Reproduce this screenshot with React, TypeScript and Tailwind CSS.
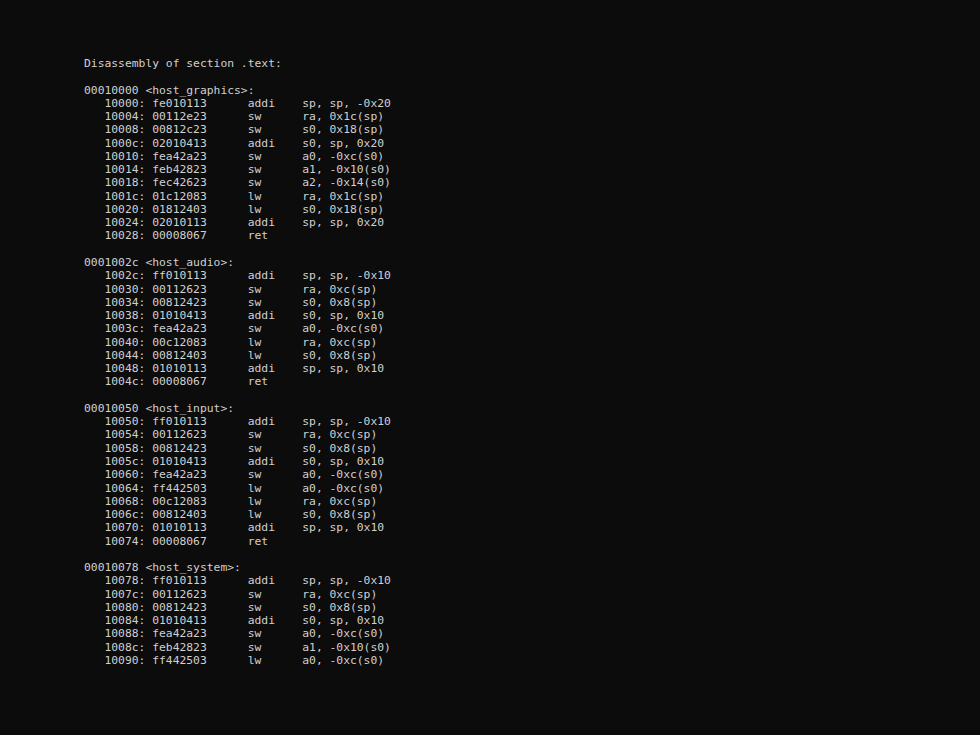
import React from 'react';

type Row = [string, string, string, string];

interface Section {
  addr: string;
  name: string;
  rows: Row[];
}

const sections: Section[] = [
  {
    addr: '00010000',
    name: 'host_graphics',
    rows: [
      ['10000', 'fe010113', 'addi', 'sp, sp, -0x20'],
      ['10004', '00112e23', 'sw', 'ra, 0x1c(sp)'],
      ['10008', '00812c23', 'sw', 's0, 0x18(sp)'],
      ['1000c', '02010413', 'addi', 's0, sp, 0x20'],
      ['10010', 'fea42a23', 'sw', 'a0, -0xc(s0)'],
      ['10014', 'feb42823', 'sw', 'a1, -0x10(s0)'],
      ['10018', 'fec42623', 'sw', 'a2, -0x14(s0)'],
      ['1001c', '01c12083', 'lw', 'ra, 0x1c(sp)'],
      ['10020', '01812403', 'lw', 's0, 0x18(sp)'],
      ['10024', '02010113', 'addi', 'sp, sp, 0x20'],
      ['10028', '00008067', 'ret', ''],
    ],
  },
  {
    addr: '0001002c',
    name: 'host_audio',
    rows: [
      ['1002c', 'ff010113', 'addi', 'sp, sp, -0x10'],
      ['10030', '00112623', 'sw', 'ra, 0xc(sp)'],
      ['10034', '00812423', 'sw', 's0, 0x8(sp)'],
      ['10038', '01010413', 'addi', 's0, sp, 0x10'],
      ['1003c', 'fea42a23', 'sw', 'a0, -0xc(s0)'],
      ['10040', '00c12083', 'lw', 'ra, 0xc(sp)'],
      ['10044', '00812403', 'lw', 's0, 0x8(sp)'],
      ['10048', '01010113', 'addi', 'sp, sp, 0x10'],
      ['1004c', '00008067', 'ret', ''],
    ],
  },
  {
    addr: '00010050',
    name: 'host_input',
    rows: [
      ['10050', 'ff010113', 'addi', 'sp, sp, -0x10'],
      ['10054', '00112623', 'sw', 'ra, 0xc(sp)'],
      ['10058', '00812423', 'sw', 's0, 0x8(sp)'],
      ['1005c', '01010413', 'addi', 's0, sp, 0x10'],
      ['10060', 'fea42a23', 'sw', 'a0, -0xc(s0)'],
      ['10064', 'ff442503', 'lw', 'a0, -0xc(s0)'],
      ['10068', '00c12083', 'lw', 'ra, 0xc(sp)'],
      ['1006c', '00812403', 'lw', 's0, 0x8(sp)'],
      ['10070', '01010113', 'addi', 'sp, sp, 0x10'],
      ['10074', '00008067', 'ret', ''],
    ],
  },
  {
    addr: '00010078',
    name: 'host_system',
    rows: [
      ['10078', 'ff010113', 'addi', 'sp, sp, -0x10'],
      ['1007c', '00112623', 'sw', 'ra, 0xc(sp)'],
      ['10080', '00812423', 'sw', 's0, 0x8(sp)'],
      ['10084', '01010413', 'addi', 's0, sp, 0x10'],
      ['10088', 'fea42a23', 'sw', 'a0, -0xc(s0)'],
      ['1008c', 'feb42823', 'sw', 'a1, -0x10(s0)'],
      ['10090', 'ff442503', 'lw', 'a0, -0xc(s0)'],
    ],
  },
];

// objdump style columns: mnemonic at col 24, operands at col 32
const fmt = (r: Row) => {
  const head = `   ${r[0]}: ${r[1]}`.padEnd(24, ' ');
  return r[3] ? head + r[2].padEnd(8, ' ') + r[3] : head + r[2];
};

export default function App() {
  const lines: string[] = ['Disassembly of section .text:', ''];
  sections.forEach((s, i) => {
    lines.push(`${s.addr} <${s.name}>:`);
    s.rows.forEach((r) => lines.push(fmt(r)));
    if (i < sections.length - 1) lines.push('');
  });

  return (
    <div className="w-[980px] h-[735px] bg-[#0c0c0c] overflow-hidden pt-[57px] pl-[84px]">
      <pre className="font-['DejaVu_Sans_Mono',monospace] text-[11.33px] leading-[13.27px] text-[#d0d0d0] whitespace-pre m-0">
        {lines.join('\n')}
      </pre>
    </div>
  );
}
